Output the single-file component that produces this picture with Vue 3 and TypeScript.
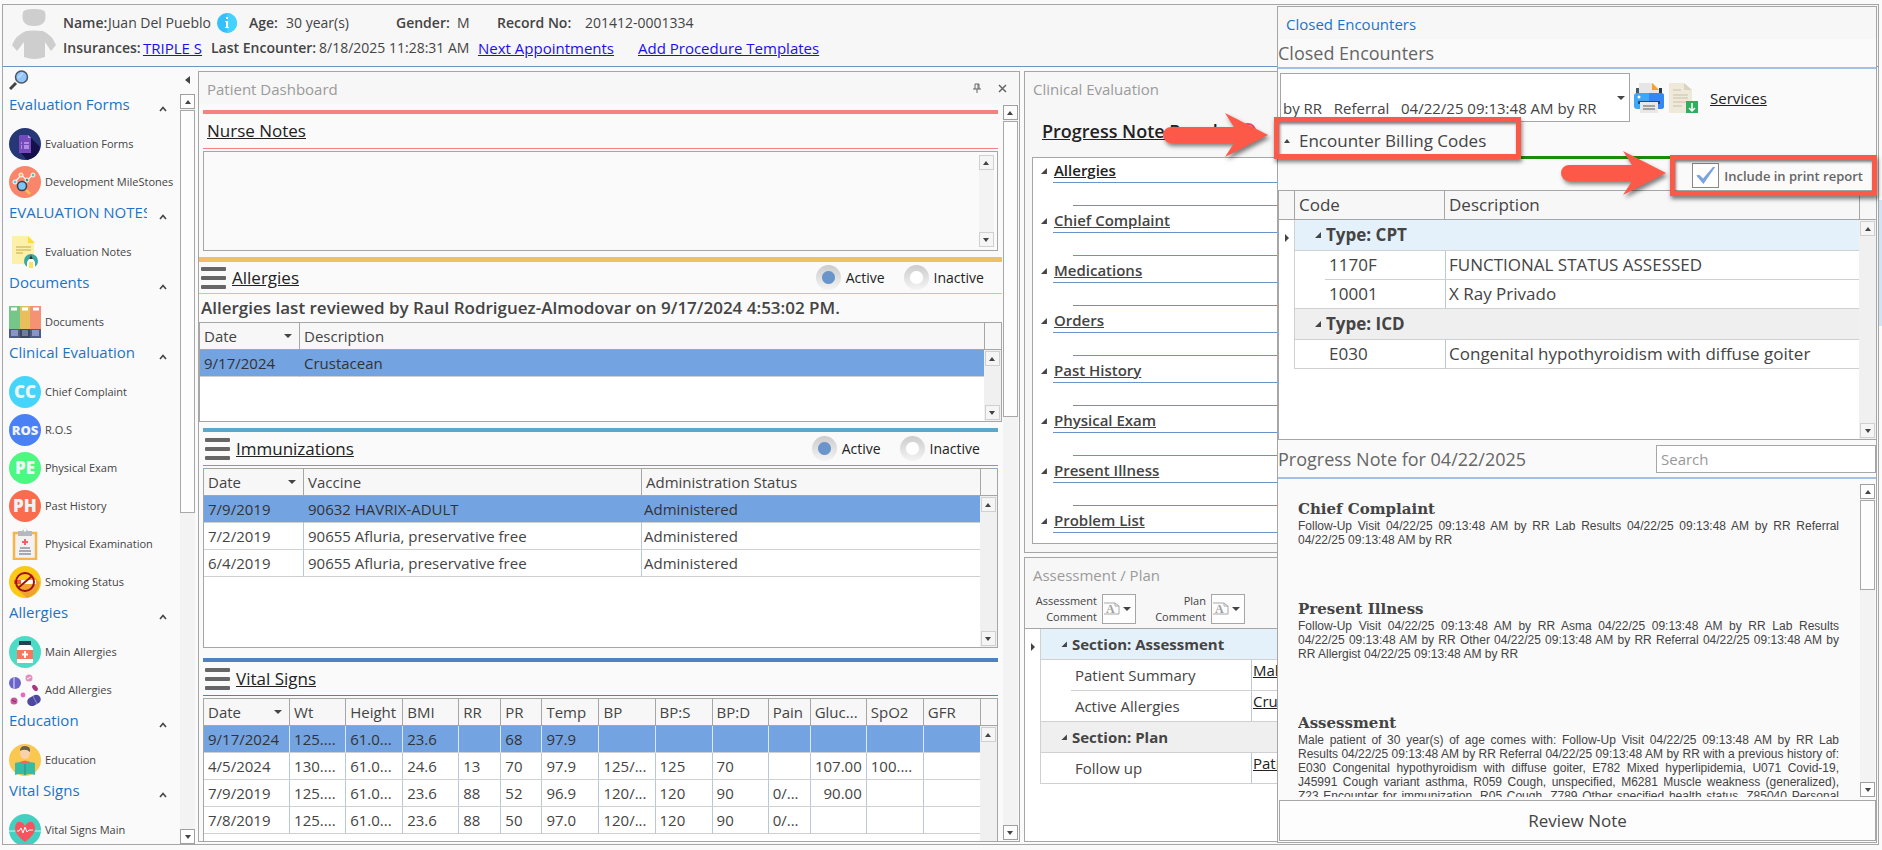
<script setup lang="ts">
import { h, ref } from 'vue'

interface MenuItem { label: string; icon: string; mark?: string }
interface MenuGroup { title: string; items: MenuItem[] }

const ScrollBar = (props: { thumb?: number; light?: boolean }) =>
  h('div', { class: ['sbar', { light: props.light }] }, [
    h('button', { type: 'button', class: 'sbtn up', 'aria-label': 'Scroll up' }, [h('i')]),
    h('div', { class: 'strack' }, props.thumb ? [h('div', { class: 'sthumb', style: { height: props.thumb + '%' } })] : []),
    h('button', { type: 'button', class: 'sbtn down', 'aria-label': 'Scroll down' }, [h('i')]),
  ])
ScrollBar.props = { thumb: Number, light: Boolean }

const menu: MenuGroup[] = [
  { title: 'Evaluation Forms', items: [{ label: 'Evaluation Forms', icon: 'forms' }, { label: 'Development MileStones', icon: 'miles' }] },
  { title: 'EVALUATION NOTES', items: [{ label: 'Evaluation Notes', icon: 'notes' }] },
  { title: 'Documents', items: [{ label: 'Documents', icon: 'docs' }] },
  {
    title: 'Clinical Evaluation',
    items: [
      { label: 'Chief Complaint', icon: 'cc', mark: 'CC' },
      { label: 'R.O.S', icon: 'ros', mark: 'ROS' },
      { label: 'Physical Exam', icon: 'pe', mark: 'PE' },
      { label: 'Past History', icon: 'ph', mark: 'PH' },
      { label: 'Physical Examination', icon: 'clip' },
      { label: 'Smoking Status', icon: 'smoke' },
    ],
  },
  { title: 'Allergies', items: [{ label: 'Main Allergies', icon: 'bottle' }, { label: 'Add Allergies', icon: 'pills' }] },
  { title: 'Education', items: [{ label: 'Education', icon: 'edu' }] },
  { title: 'Vital Signs', items: [{ label: 'Vital Signs Main', icon: 'heart' }] },
]

const allergyStatus = ref('active')
const immunStatus = ref('active')
const includePrint = ref(true)
const search = ref('')

const vaccines = [
  ['7/9/2019', '90632 HAVRIX-ADULT', 'Administered'],
  ['7/2/2019', '90655 Afluria, preservative free', 'Administered'],
  ['6/4/2019', '90655 Afluria, preservative free', 'Administered'],
]

const vitalCols = [
  { name: 'Date', w: 86 }, { name: 'Wt', w: 56 }, { name: 'Height', w: 57 }, { name: 'BMI', w: 56 },
  { name: 'RR', w: 42 }, { name: 'PR', w: 41 }, { name: 'Temp', w: 57 }, { name: 'BP', w: 56 },
  { name: 'BP:S', w: 57 }, { name: 'BP:D', w: 56 }, { name: 'Pain', w: 42 }, { name: 'Gluc...', w: 56 },
  { name: 'SpO2', w: 57 }, { name: 'GFR', w: 56 },
]
const vitals = [
  ['9/17/2024', '125....', '61.0...', '23.6', '', '68', '97.9', '', '', '', '', '', '', ''],
  ['4/5/2024', '130....', '61.0...', '24.6', '13', '70', '97.9', '125/...', '125', '70', '', '107.00', '100....', ''],
  ['7/9/2019', '125....', '61.0...', '23.6', '88', '52', '96.9', '120/...', '120', '90', '0/...', '90.00', '', ''],
  ['7/8/2019', '125....', '61.0...', '23.6', '88', '50', '97.0', '120/...', '120', '90', '0/...', '', '', ''],
]

const noteSections = ['Allergies', 'Chief Complaint', 'Medications', 'Orders', 'Past History', 'Physical Exam', 'Present Illness', 'Problem List']

const encounter = 'by RR\u00a0\u00a0 Referral\u00a0\u00a0 04/22/25 09:13:48 AM by RR'

const note = [
  { title: 'Chief Complaint', size: 'short', text: 'Follow-Up Visit 04/22/25 09:13:48 AM by RR Lab Results 04/22/25 09:13:48 AM by RR Referral 04/22/25 09:13:48 AM by RR' },
  { title: 'Present Illness', size: 'mid', text: 'Follow-Up Visit 04/22/25 09:13:48 AM by RR Asma 04/22/25 09:13:48 AM by RR Lab Results 04/22/25 09:13:48 AM by RR Other 04/22/25 09:13:48 AM by RR Referral 04/22/25 09:13:48 AM by RR Allergist 04/22/25 09:13:48 AM by RR' },
  { title: 'Assessment', size: 'long', text: 'Male patient of 30 year(s) of age comes with: Follow-Up Visit 04/22/25 09:13:48 AM by RR Lab Results 04/22/25 09:13:48 AM by RR Referral 04/22/25 09:13:48 AM by RR with a previous history of: E030 Congenital hypothyroidism with diffuse goiter, E782 Mixed hyperlipidemia, U071 Covid-19, J45991 Cough variant asthma, R059 Cough, unspecified, M6281 Muscle weakness (generalized), Z23 Encounter for immunization, R05 Cough, Z789 Other specified health status, Z85040 Personal history' },
]
</script>

<template>
  <div class="page">
    <div class="frame">
      <header class="patient">
        <svg class="avatar" viewBox="0 0 44 50" aria-hidden="true">
          <path d="M11 3Q12 0 22 0Q32 0 33 3Q36 17 22 17Q8 17 11 3Z" fill="#cecece" />
          <path d="M14 22Q22 21 31 22Q40 26 44 36L39 42L33 33V48Q22 52 12 48V33L5 42L0 36Q4 26 14 22Z" fill="#cecece" />
        </svg>
        <div class="facts">
          <div class="row one">
            <b>Name:</b><span>Juan Del Pueblo</span>
            <svg viewBox="0 0 20 20" width="20" height="20" aria-label="Information"><circle cx="10" cy="10" r="10" fill="#34c0fb" /><path d="M10 0A10 10 0 0 1 10 20Z" fill="#46d2ff" /><path d="M9 4H11V6H9ZM8 8H11V14H12V15H8V14H9V9H8Z" fill="#fff" /></svg>
            <b>Age:</b><span>30 year(s)</span><b>Gender:</b><span>M</span><b>Record No:</b><span>201412-0001334</span>
          </div>
          <div class="row two">
            <b>Insurances:</b><a href="#">TRIPLE S</a><b>Last Encounter:</b><span>8/18/2025 11:28:31 AM</span><a href="#">Next Appointments</a><a href="#">Add Procedure Templates</a>
          </div>
        </div>
      </header>

      <main class="work">
        <nav class="side">
          <div class="sidetop">
            <svg width="20" height="20" viewBox="0 0 20 20" aria-label="Search"><path d="M1 19L7 13" stroke="#444" stroke-width="3" /><circle cx="12.500" cy="7" r="6" fill="#93c6fb" stroke="#4d5560" stroke-width="1.500" /><path d="M9 8L14 3" stroke="#bfe0ff" stroke-width="1.500" /></svg>
            <svg width="5" height="8" viewBox="0 0 5 8" aria-label="Collapse"><path d="M5 0V8L0 4Z" fill="#444" /></svg>
          </div>
          <div class="sidebody">
            <div class="groups">
              <section v-for="g in menu" :key="g.title">
                <h2><span>{{ g.title }}</span><svg width="8" height="6" viewBox="0 0 8 6"><path d="M1 5L4 1.500L7 5" fill="none" stroke="#444" stroke-width="1.600" /></svg></h2>
                <a v-for="i in g.items" :key="i.label" href="#" class="item">
                  <span v-if="i.mark" class="mark" :class="i.icon">{{ i.mark }}</span>
                  <svg v-else width="32" height="32" viewBox="0 0 32 32" aria-hidden="true">
                    <template v-if="i.icon === 'forms'">
                      <circle cx="16" cy="16" r="16" fill="#263775" /><path d="M12 25L22 10L31 19Q29 30 18 32Z" fill="#150f4a" /><path d="M11 7H19L22 10V25H10V8Z" fill="#7649bd" /><path d="M19 7L22 10H19Z" fill="#b99ae8" /><path d="M12 15H13M15 15H20M12 18H13M15 18H20M12 20H13M15 20H20" stroke="#e4d6fa" />
                    </template>
                    <template v-else-if="i.icon === 'miles'">
                      <circle cx="16" cy="16" r="16" fill="#f9856a" /><path d="M6 16L12 9L18 14L24 9" fill="none" stroke="#fff" stroke-width="1.200" /><circle cx="6" cy="16" r="2" fill="#5cc7f5" stroke="#fff" /><circle cx="12" cy="9" r="2" fill="#f8b84a" stroke="#fff" /><circle cx="18" cy="14" r="2" fill="#2b9c8c" stroke="#fff" /><circle cx="24" cy="9" r="2" fill="#3fd0b8" stroke="#fff" /><path d="M17 24L21 28" stroke="#f8c34a" stroke-width="2.500" /><circle cx="13" cy="20" r="4.500" fill="#7ac8f7" stroke="#3b4256" stroke-width="1.600" />
                    </template>
                    <template v-else-if="i.icon === 'notes'">
                      <path d="M3 0H19L25 7V28H3Z" fill="#fdf0a8" /><path d="M19 0L26 7H19Z" fill="#fcdc35" /><path d="M7 11H22M7 14H22M7 17H14" stroke="#c7a944" /><circle cx="22" cy="25" r="7" fill="#37a9a3" /><path d="M18 32V26L22 20L26 26V32Z" fill="#fff" /><path d="M20 32V26H24V32Z" fill="#fde35b" /><path d="M20 23L22 19L24 23Z" fill="#333" />
                    </template>
                    <template v-else-if="i.icon === 'docs'">
                      <rect width="11" height="23" fill="#76c68a" /><rect x="11" width="10" height="23" fill="#e9bf5b" /><rect x="21" width="11" height="23" fill="#f59273" /><rect y="23" width="32" height="9" fill="#4f5a86" /><rect x="11" y="23" width="10" height="9" fill="#3d4766" /><path d="M2 3H8M13 3H19M24 3H30" stroke="#fff" stroke-width="3" /><path d="M2 24H9V30H2ZM23 24H30V30H23Z" fill="#8a95c4" /><rect x="13" y="24" width="6" height="6" fill="#6f7da5" />
                    </template>
                    <template v-else-if="i.icon === 'clip'">
                      <rect x="5" y="5" width="22" height="26" fill="#f2f2f2" stroke="#f7b548" stroke-width="2.500" /><path d="M9 3H13Q16-2 19 3H23V8H9Z" fill="#b5b8bd" /><circle cx="16" cy="2" r="1.500" fill="#fff" /><path d="M16 11V17M13 14H19" stroke="#fb5d68" stroke-width="2" /><path d="M11 20H21M10 23H22M10 26H22" stroke="#5d6470" />
                    </template>
                    <template v-else-if="i.icon === 'smoke'">
                      <circle cx="16" cy="16" r="16" fill="#fbc918" /><path d="M23 8L31 17Q29 29 18 32L9 24Z" fill="#eda233" /><rect x="5" y="14" width="7" height="4" fill="#f05a32" /><rect x="12" y="14" width="15" height="4" fill="#fff" /><circle cx="16" cy="16" r="9" fill="none" stroke="#a01010" stroke-width="2" /><path d="M9 22L23 10" stroke="#a01010" stroke-width="2" />
                    </template>
                    <template v-else-if="i.icon === 'bottle'">
                      <circle cx="16" cy="16" r="16" fill="#4edbc5" /><rect x="10" y="5" width="12" height="4" fill="#26405a" /><path d="M11 9H21L24 12V27H8V12Z" fill="#fff" /><rect x="8" y="14" width="16" height="9" fill="#fa7660" /><path d="M16 15V22M13 18.500H19" stroke="#fff" stroke-width="2" />
                    </template>
                    <template v-else-if="i.icon === 'pills'">
                      <circle cx="6" cy="9" r="6" fill="#6a65c6" /><path d="M5 3V15" stroke="#aaa5ea" stroke-width="2" /><circle cx="20" cy="4" r="3.500" fill="#e48cbf" /><path d="M18 5L22 3" stroke="#fff" /><ellipse cx="26" cy="14" rx="2.200" ry="3.500" transform="rotate(-40 26 14)" fill="#a93482" /><circle cx="14" cy="21" r="2.400" fill="#f561c2" /><circle cx="5" cy="27" r="3.500" fill="#c9559a" /><path d="M3 26L7 28" stroke="#7a2a62" /><rect x="18" y="22" width="14" height="9" rx="4.500" transform="rotate(-28 25 26.500)" fill="#4e49a0" /><path d="M24 22L28 30" stroke="#8f8ad8" />
                    </template>
                    <template v-else-if="i.icon === 'edu'">
                      <circle cx="16" cy="16" r="16" fill="#fbc84f" /><path d="M8 20Q16 13 24 20V24H8Z" fill="#f4635e" /><ellipse cx="16" cy="9" rx="5" ry="6" fill="#f7d2ac" /><path d="M11 7Q11 2 16 2Q22 2 21 8Q18 5 13 6Z" fill="#6b5d52" /><path d="M6 19Q11 17 16 20Q21 17 26 19V31Q20 29 16 31Q12 29 6 31Z" fill="#34bca8" /><path d="M16 20V31" stroke="#1f9384" />
                    </template>
                    <template v-else>
                      <circle cx="16" cy="16" r="16" fill="#43d0c0" /><path d="M0 17H8M24 17H32" stroke="#d8f7f2" /><path d="M16 28Q5 20 6 13Q7 7 12 8Q15 9 16 12Q17 9 20 8Q25 7 26 13Q27 20 16 28Z" fill="#f9545e" /><path d="M8 17H10L12 14L14 19L16 13L18 18L20 16H24" fill="none" stroke="#fff" />
                    </template>
                  </svg>
                  <span class="lbl">{{ i.label }}</span>
                </a>
              </section>
            </div>
            <ScrollBar :thumb="56" />
          </div>
        </nav>

        <section class="panel dash">
          <div class="ptitle">
            <h1>Patient Dashboard</h1>
            <span class="tools">
              <button type="button" aria-label="Pin"><svg width="8" height="10" viewBox="0 0 8 10"><path d="M2 1H6V6M2 1V6M5 1V6M0 6H8M4 6V10" fill="none" stroke="#666" /></svg></button>
              <button type="button" aria-label="Close"><svg width="9" height="9" viewBox="0 0 9 9"><path d="M1 1L8 8M8 1L1 8" stroke="#666" stroke-width="1.500" /></svg></button>
            </span>
          </div>
          <div class="pbody">
            <div class="dcol">
              <section class="card pink">
                <div class="ctitle"><a href="#">Nurse Notes</a></div>
                <div class="memo">
                  <textarea aria-label="Nurse Notes"></textarea>
                  <ScrollBar light />
                </div>
              </section>

              <section class="card amber wide">
                <div class="ctitle">
                  <button class="burger" type="button" aria-label="Allergies menu"><i /><i /><i /></button>
                  <a href="#">Allergies</a>
                  <div class="radios">
                    <label><input v-model="allergyStatus" type="radio" name="alg" value="active" />Active</label>
                    <label><input v-model="allergyStatus" type="radio" name="alg" value="inactive" />Inactive</label>
                  </div>
                </div>
                <p class="review">Allergies last reviewed by Raul Rodriguez-Almodovar on 9/17/2024 4:53:02 PM.</p>
                <div class="gridbox small">
                  <div class="gmain">
                    <table>
                      <colgroup><col class="w100" /><col /></colgroup>
                      <thead><tr><th>Date<i class="sort" /></th><th>Description</th></tr></thead>
                      <tbody><tr class="sel flat"><td>9/17/2024</td><td>Crustacean</td></tr></tbody>
                    </table>
                  </div>
                  <div class="gside"><span /><ScrollBar light /></div>
                </div>
              </section>

              <section class="card teal">
                <div class="ctitle">
                  <button class="burger" type="button" aria-label="Immunizations menu"><i /><i /><i /></button>
                  <a href="#">Immunizations</a>
                  <div class="radios">
                    <label><input v-model="immunStatus" type="radio" name="imm" value="active" />Active</label>
                    <label><input v-model="immunStatus" type="radio" name="imm" value="inactive" />Inactive</label>
                  </div>
                </div>
                <div class="gridbox tall">
                  <div class="gmain">
                    <table>
                      <colgroup><col class="w100" /><col /><col /></colgroup>
                      <thead><tr><th>Date<i class="sort" /></th><th>Vaccine</th><th>Administration Status</th></tr></thead>
                      <tbody>
                        <tr v-for="(r, n) in vaccines" :key="n" :class="{ sel: n === 0, flat: n === 0 }"><td v-for="(c, k) in r" :key="k" :class="{ tight: k === 2 }">{{ c }}</td></tr>
                      </tbody>
                    </table>
                  </div>
                  <div class="gside"><span /><ScrollBar light /></div>
                </div>
              </section>

              <section class="card blue">
                <div class="ctitle">
                  <button class="burger" type="button" aria-label="Vital Signs menu"><i /><i /><i /></button>
                  <a href="#">Vital Signs</a>
                </div>
                <div class="gridbox rest">
                  <div class="gmain">
                    <table>
                      <colgroup><col v-for="c in vitalCols" :key="c.name" :style="{ width: c.w + 'px' }" /></colgroup>
                      <thead><tr><th v-for="(c, n) in vitalCols" :key="c.name">{{ c.name }}<i v-if="n === 0" class="sort" /></th></tr></thead>
                      <tbody>
                        <tr v-for="(r, n) in vitals" :key="n" :class="{ sel: n === 0 }"><td v-for="(c, k) in r" :key="k" :class="{ num: k === 11 }">{{ c }}</td></tr>
                      </tbody>
                    </table>
                  </div>
                  <div class="gside"><span /><ScrollBar light class="nodown" /></div>
                </div>
              </section>
            </div>
            <ScrollBar :thumb="42" />
          </div>
        </section>

        <div class="right">
          <section class="panel clin">
            <div class="ptitle"><h1>Clinical Evaluation</h1></div>
            <div class="pn"><a href="#">Progress Note Panel</a><svg width="16" height="16" viewBox="0 0 16 16"><circle cx="8" cy="8" r="7" fill="#fbe4ea" stroke="#f2466c" stroke-width="2" /></svg></div>
            <ul class="tree">
              <li v-for="s in noteSections" :key="s">
                <div class="thead"><i class="tri" /><a href="#">{{ s }}</a></div>
                <div class="tline" />
              </li>
            </ul>
          </section>
          <section class="panel plan">
            <div class="ptitle"><h1>Assessment / Plan</h1></div>
            <div class="comments">
              <template v-for="c in ['Assessment', 'Plan']" :key="c">
                <span>{{ c }}<br />Comment</span>
                <button type="button" :aria-label="c + ' comment'">
                  <svg width="16" height="14" viewBox="0 0 16 14"><path d="M0 1H11L15 4V12H0M11 1V4H15" fill="none" stroke="#a8a8a8" /><text x="2" y="11" font-family="Liberation Serif, serif" font-size="12" font-weight="bold" fill="#a0a0a0">A</text></svg>
                  <i class="sort" />
                </button>
              </template>
            </div>
            <table class="ptable">
              <colgroup><col class="c16" /><col class="c30" /><col class="c180" /><col /></colgroup>
              <tbody>
                <tr class="hl"><td class="ind"><i class="ptr" /></td><th colspan="3"><i class="tri" />Section: Assessment</th></tr>
                <tr><td class="ind" /><td class="nob" /><td class="key">Patient Summary</td><td><a href="#">Male</a></td></tr>
                <tr><td class="ind" /><td /><td class="key">Active Allergies</td><td><a href="#">Crust</a></td></tr>
                <tr class="gr"><td class="ind" /><th colspan="3"><i class="tri" />Section: Plan</th></tr>
                <tr><td class="ind" /><td /><td class="key">Follow up</td><td><a href="#">Patie</a></td></tr>
              </tbody>
            </table>
          </section>
        </div>
      </main>

      <aside class="drawer">
        <h2 class="dtitle">Closed Encounters</h2>
        <h3 class="dhead">Closed Encounters</h3>
        <div class="pick">
          <div class="combo">
            <select aria-label="Encounter"><option>{{ encounter }}</option></select>
            <i class="sort" />
          </div>
          <button type="button" aria-label="Print">
            <svg width="30" height="30" viewBox="0 0 30 30"><path d="M5 0H19L25 6V12H5Z" fill="#e6e6e6" /><path d="M18 0L25 7H18Z" fill="#fa9f25" /><rect x="2" y="5" width="3" height="6" fill="#455a64" /><rect x="25" y="5" width="3" height="6" fill="#263d47" /><rect y="10" width="30" height="16" rx="3" fill="#3fa7f7" /><path d="M15 10H27Q30 10 30 13V23Q30 26 27 26H15Z" fill="#3588f3" /><rect x="4" y="18" width="22" height="3" fill="#2b4a66" /><circle cx="5" cy="14" r="1.500" fill="#fff" /><rect x="6" y="19" width="18" height="11" fill="#e8e8e8" /><path d="M9 23H21M9 26H21" stroke="#8a8a8a" stroke-width="1.500" /></svg>
          </button>
          <button type="button" aria-label="Export">
            <svg width="30" height="30" viewBox="0 0 30 30"><path d="M1 0H16L24 7V30H1Z" fill="#eee9d9" /><path d="M16 0L24 7H16Z" fill="#d9d3c0" /><path d="M5 7H13M5 12H20M5 15H20M5 19H20M5 23H14" stroke="#c9c2ad" /><rect x="18" y="18" width="12" height="12" fill="#2fae5f" /><path d="M24 20V28M21 25L24 28L27 25" fill="none" stroke="#fff" stroke-width="1.500" /></svg>
          </button>
          <a href="#">Services</a>
        </div>
        <div class="billing">
          <button type="button" class="bhead"><i class="upt" />Encounter Billing Codes</button>
          <div class="ring r1" />
          <svg class="arrow a1" width="110" height="50" viewBox="0 0 110 50" aria-hidden="true"><path d="M8 14H71L62 0L105 22L62 44L71 30H8A8 8 0 0 1 8 14Z" fill="#fd5949" /></svg>
        </div>
        <div class="print">
          <label><input v-model="includePrint" type="checkbox" /><span>Include in print report</span></label>
          <div class="ring r2" />
          <svg class="arrow a2" width="110" height="50" viewBox="0 0 110 50" aria-hidden="true"><path d="M8 14H71L62 0L105 22L62 44L71 30H8A8 8 0 0 1 8 14Z" fill="#fd5949" /></svg>
        </div>
        <div class="codes">
          <table>
            <colgroup><col class="c16" /><col class="c30" /><col class="c120" /><col /></colgroup>
            <thead><tr><th /><th colspan="2">Code</th><th>Description</th></tr></thead>
            <tbody>
              <tr class="hl"><td class="ind"><i class="ptr" /></td><th colspan="3"><i class="tri" />Type: CPT</th></tr>
              <tr><td class="ind" /><td class="nob" /><td class="key">1170F</td><td>FUNCTIONAL STATUS ASSESSED</td></tr>
              <tr><td class="ind" /><td /><td class="key">10001</td><td>X Ray Privado</td></tr>
              <tr class="gr"><td class="ind" /><th colspan="3"><i class="tri" />Type: ICD</th></tr>
              <tr><td class="ind" /><td /><td class="key">E030</td><td>Congenital hypothyroidism with diffuse goiter</td></tr>
            </tbody>
          </table>
          <div class="gside"><span /><ScrollBar light /></div>
        </div>
        <div class="pnote">
          <h3>Progress Note for 04/22/2025</h3>
          <input v-model="search" type="text" placeholder="Search" aria-label="Search" />
        </div>
        <div class="note">
          <div class="paper">
            <article v-for="n in note" :key="n.title" :class="n.size">
              <h4>{{ n.title }}</h4>
              <p>{{ n.text }}</p>
            </article>
          </div>
          <ScrollBar :thumb="32" />
        </div>
        <button type="button" class="reviewbtn">Review Note</button>
      </aside>
    </div>
    <div class="edge" />
  </div>
</template>

<style>
body { margin: 0; background: #fafafa; }
.sbar { display: flex; flex-direction: column; width: 15px; flex: none; background: #f3f3f3; }
.sbtn { display: flex; align-items: center; justify-content: center; width: 15px; height: 15px; padding: 0; flex: none; border: 1px solid #a0a0a0; background: #fdfdfd; box-sizing: border-box; }
.sbtn i { border: 3px solid transparent; }
.sbtn.up i { border-bottom: 4px solid #444; border-top: 0; }
.sbtn.down i { border-top: 4px solid #444; border-bottom: 0; }
.strack { flex: 1; padding-top: 1px; }
.sthumb { box-sizing: border-box; border: 1px solid #a8a8a8; background: #fdfdfd; }
.sbar.light .sbtn { border-color: #d0d0d0; background: #f5f5f5; }
.sbar.nodown .down { display: none; }
</style>

<style scoped>
.page { position: relative; height: 100vh; min-height: 850px; padding: 4px 3px 5px 2px; box-sizing: border-box; background: #fafafa; color: #444; font: 14px/20px "Open Sans", "Noto Sans", sans-serif; overflow: hidden; }
.edge { position: absolute; right: 0; top: 200px; width: 3px; height: 126px; background: #cfe5f5; }
.frame { position: relative; height: 100%; box-sizing: border-box; border: 1px solid #a6a6a6; display: flex; flex-direction: column; }
h1, h2, h3, h4, p, ul { margin: 0; padding: 0; font-weight: 400; }
button { font: inherit; color: inherit; cursor: pointer; }
i { font-style: normal; display: inline-block; flex: none; }
a { color: inherit; }

.patient { display: flex; height: 61px; flex: none; border-bottom: 1px solid #6a94c9; background: #f7f7f7; }
.avatar { width: 44px; height: 50px; margin: 4px 7px 0 9px; }
.row { display: grid; white-space: nowrap; height: 25px; align-items: center; }
.facts { padding-top: 5px; }
.row b { font-weight: 600; }
.row a { color: #1a0ff0; font-size: 15px; }
.one { grid-template-columns: 45px 109px 32px 37px 110px 61px 40px 88px auto; }
.two { grid-template-columns: 80px 68px 108px 159px 160px auto; }

.work { flex: 1; min-height: 0; display: grid; grid-template-columns: 195px minmax(0, 820fr) minmax(0, 855fr); padding: 0 1px 2px 0; }
.side { display: flex; flex-direction: column; min-height: 0; margin-bottom: -2px; }
.sidetop { display: flex; justify-content: space-between; align-items: center; height: 26px; flex: none; padding: 0 8px 0 6px; }
.sidebody { flex: 1; display: flex; min-height: 0; justify-content: space-between; padding: 0 3px 0 0; }
.sidebody > .sbar { margin-top: 1px; }
.groups { flex: 1; overflow: hidden; padding-left: 6px; }
.groups h2 { display: flex; justify-content: space-between; height: 32px; width: 158px; font-size: 15px; line-height: 22px; color: #1e73c6; }
.groups h2 span { width: 138px; overflow: hidden; white-space: nowrap; }
.groups h2 svg { margin-top: 13px; }
.item { display: flex; align-items: center; height: 38px; gap: 4px; font-size: 11px; text-decoration: none; white-space: nowrap; }
.mark { width: 32px; height: 32px; border-radius: 16px; text-align: center; line-height: 32px; font-weight: 800; font-size: 17px; color: #eef3f5; flex: none; }
.item svg { flex: none; }
.cc { background: #45d5fa; }
.ros { background: #4a80f5; font-size: 13px; }
.pe { background: #4cf881; }
.ph { background: #f96c4e; }

.panel { border: 1px solid #a6a6a6; box-sizing: border-box; min-height: 0; overflow: hidden; display: flex; flex-direction: column; background: #fafafa; }
.dash { margin-top: 4px; }
.ptitle { display: flex; justify-content: space-between; height: 32px; flex: none; align-items: center; padding: 0 8px; background: #f7f7f7; color: #9b9b9b; box-sizing: border-box; }
.ptitle h1 { font-size: 15px; padding-top: 2px; }
.tools { display: flex; gap: 17px; padding-right: 4px; }
.tools button { border: 0; background: none; padding: 0; display: flex; align-items: center; }
.pbody { flex: 1; min-height: 0; display: flex; padding: 1px 1px 1px 0; }
.dcol { flex: 1; min-width: 0; padding-top: 5px; display: flex; flex-direction: column; margin-bottom: -1px; }
.card { margin: 0 5px 0 4px; border-top: 4px solid var(--c); }
.pink { --c: #f5827f; padding-bottom: 6px; }
.amber { --c: #efc164; padding-bottom: 6px; }
.teal { --c: #5aa9cb; padding-bottom: 10px; }
.blue { --c: #4f82c0; flex: 1; min-height: 0; display: flex; flex-direction: column; }
.wide { margin: 0 1px 0 0; border-top-width: 5px; }
.ctitle { display: flex; align-items: center; height: 33px; flex: none; border-bottom: 1px solid var(--c); padding-left: 2px; }
.pink .ctitle { height: 34px; padding-left: 4px; }
.wide .ctitle { height: 31px; }
.ctitle a { font-size: 17px; line-height: 24px; color: #222; }
.burger { display: flex; flex-direction: column; gap: 5px; width: 25px; border: 0; padding: 0; margin-right: 6px; background: none; }
.burger i { height: 4px; width: 25px; background: #666; border-radius: 1px; }
.radios { margin-left: auto; margin-right: 18px; display: flex; gap: 19px; color: #222; }
.radios label { display: flex; align-items: center; gap: 5px; }
.radios input { appearance: none; width: 25px; height: 25px; margin: 0; border-radius: 13px; background: radial-gradient(circle, #fff 6px, transparent 7px), linear-gradient(#cccccc, #f4f4f4); }
.radios input:checked { background: radial-gradient(circle, #6a95cb 6px, transparent 7px), linear-gradient(#cccccc, #f4f4f4); }
.memo { display: flex; height: 92px; margin-top: 2px; border: 1px solid #a6a6a6; padding: 3px 3px 3px 0; }
.memo textarea { flex: 1; border: 0; resize: none; background: none; outline: 0; }
.review { height: 28px; line-height: 28px; font-size: 17px; font-weight: 600; padding-left: 2px; white-space: nowrap; overflow: hidden; }
.gridbox { display: flex; border: 1px solid #a6a6a6; background: #fff; box-sizing: border-box; overflow: hidden; margin-top: 2px; }
.small { height: 100px; margin-top: 0; }
.tall { height: 180px; }
.rest { flex: 1; min-height: 0; border-bottom: 0; }
.gmain { flex: 1; min-width: 0; }
table { border-collapse: separate; border-spacing: 0; table-layout: fixed; width: 100%; }
.w100 { width: 100px; }
.gmain th, .gmain td { height: 26px; padding: 0 0 0 4px; text-align: left; font-weight: 400; font-size: 15px; line-height: 24px; white-space: nowrap; overflow: hidden; border-right: 1px solid #b9c8d8; border-bottom: 1px solid #d0d0d0; }
.gmain th { background: #f7f7f7; border-color: #a6a6a6; position: relative; }
.gmain td:last-child { border-right: 0; }
.gmain th:last-child { border-right: 0; }
.gmain td.tight { padding-left: 2px; }
.gmain td.num { text-align: right; padding: 0 4px 0 0; }
.gmain .sel td { background: #74a3e2; color: #333; border-right-color: #dbe8f8; }
.gmain .flat td { border-right-color: #74a3e2; }
.sort { border: 4px solid transparent; border-top: 4px solid #444; border-bottom: 0; }
th .sort { position: absolute; right: 7px; top: 11px; }
.gside { display: flex; flex-direction: column; width: 17px; flex: none; background: #f0f0f0; }
.gside > span { height: 26px; flex: none; border-left: 1px solid #a6a6a6; border-bottom: 1px solid #a6a6a6; background: #f7f7f7; }
.gside .sbar { flex: 1; margin: 1px; background: #f0f0f0; }

.right { margin: 4px 0 0 4px; display: flex; flex-direction: column; gap: 4px; min-height: 0; }
.clin { flex: 483 1 0; background: #f7f7f7; }
.plan { flex: 284 1 0; background: #f7f7f7; }
.pn { display: flex; align-items: center; gap: 22px; height: 53px; padding-left: 17px; flex: none; font-size: 18px; font-weight: 600; color: #222; }
.tree { list-style: none; margin: 0 8px 8px 7px; border: 1px solid #a6a6a6; flex: 1; background: #fff; overflow: hidden; }
.tree li { height: 50px; font-size: 15px; font-weight: 600; }
.tree li:first-child { color: #222; }
.thead { display: flex; align-items: center; gap: 7px; height: 24px; padding: 0 0 0 8px; }
.thead a { line-height: 24px; }
.tri { width: 6px; height: 6px; background: #444; clip-path: polygon(100% 0, 100% 100%, 0 100%); margin-top: 2px; }
.tline { margin-left: 20px; height: 22px; border-top: 1px solid #6a94c9; }
.tline::after { content: ""; display: block; margin: 22px 0 0 20px; border-top: 1px solid #6a94c9; }
.tree li:last-child .tline::after { display: none; }
.comments { display: grid; grid-template-columns: 64px 34px 65px 34px; column-gap: 5px; height: 38px; flex: none; padding-left: 8px; align-items: center; font-size: 11px; line-height: 16px; text-align: right; }
.comments button { height: 30px; border: 1px solid #a6a6a6; background: #fdfdfd; padding: 0 4px 0 1px; display: flex; align-items: center; justify-content: space-between; }
.ptable { background: #fff; border-top: 1px solid #a6a6a6; }
.plan::after { content: ""; flex: 1; background: #fff; }
.c16 { width: 16px; } .c30 { width: 30px; } .c180 { width: 180px; } .c120 { width: 120px; }
.ptable td, .ptable th, .codes td, .codes th { height: 30px; padding: 0 0 0 4px; text-align: left; font-weight: 400; font-size: 15px; white-space: nowrap; overflow: hidden; border-bottom: 1px solid #d0d0d0; }
.ptable td:last-child { border-left: 1px solid #b9c8d8; padding-left: 1px; vertical-align: top; color: #222; }
.ptable td.ind, .codes td.ind { border-bottom: 0; border-right: 1px solid #d0d0d0; padding: 0 0 0 6px; background: #fff; }
.nob { border-bottom: 0 !important; }
tbody th .tri { margin: 0 5px 3px 16px; }
tbody .hl th { background: #e4f1fa; }
tbody .gr th { background: #efefef; }
.ptable tbody th, .codes tbody th { font-weight: 700; }
.ptr { border: 4px solid transparent; border-left: 4px solid #444; border-right: 0; }

.drawer { position: absolute; top: 1px; right: 1px; bottom: 1px; width: 598px; border: 1px solid #a6a6a6; background: #fafafa; display: flex; flex-direction: column; }
.dtitle { height: 32px; line-height: 34px; padding-left: 8px; font-size: 15px; color: #1e73c6; background: #f7f7f7; }
.dhead { height: 28px; line-height: 28px; font-size: 18px; color: #666; border-bottom: 2px solid #a3c1e5; }
.pick { display: flex; align-items: center; height: 49px; margin-top: 4px; padding-left: 2px; font-size: 15px; }
.combo { position: relative; width: 350px; height: 49px; margin-right: 4px; }
.combo select { appearance: none; width: 100%; height: 100%; box-sizing: border-box; border: 1px solid #a6a6a6; border-radius: 0; background: #fff; color: #444; font: inherit; padding: 20px 0 0 2px; }
.combo .sort { position: absolute; right: 5px; top: 23px; }
.pick button { border: 0; background: none; padding: 0; margin-right: 4px; display: flex; }
.pick a { margin-left: 8px; color: #222; }
.billing { position: relative; height: 34px; border-bottom: 3px solid #1c8c0c; margin-left: 1px; }
.bhead { display: flex; align-items: center; gap: 9px; border: 0; background: none; height: 38px; padding: 0 0 0 5px; font-size: 17px; }
.upt { border: 3px solid transparent; border-bottom: 4px solid #444; border-top: 0; }
.ring { position: absolute; border: 5px solid #fd5949; box-sizing: border-box; box-shadow: 1px 3px 4px rgba(0, 0, 0, .5), inset 1px 2px 3px rgba(0, 0, 0, .5); pointer-events: none; z-index: 2; }
.r1 { left: -5px; top: -5px; width: 247px; height: 42px; }
.r2 { right: -1px; top: -4px; width: 207px; height: 41px; }
.arrow { position: absolute; z-index: 3; overflow: visible; filter: drop-shadow(2px 3px 2px rgba(0, 0, 0, .5)); }
.a1 { left: -116px; top: -9px; }
.a2 { left: 283px; top: -8px; }
.print { position: relative; height: 31px; display: flex; justify-content: flex-end; padding-right: 13px; }
.print label { display: flex; align-items: center; gap: 5px; font-size: 13px; font-weight: 600; color: #666; padding-top: 2px; }
.print input { appearance: none; width: 27px; height: 25px; margin: 0; border: 1px solid #888; background: #fff; box-sizing: border-box; }
.print input:checked::before { content: ""; display: block; width: 19px; height: 17px; margin: 3px; background: #7ba3dc; clip-path: polygon(0 50%, 16% 46%, 36% 68%, 88% 0, 100% 0, 38% 100%); }
.codes { display: flex; height: 248px; border: 1px solid #a6a6a6; border-right: 0; background: #fff; overflow: hidden; flex: none; }
.codes table { align-self: flex-start; }
.codes th, .codes td { font-size: 17px; height: 28px; }
.codes tbody th { height: 30px; }
.codes thead th { background: #f7f7f7; border-color: #a6a6a6; border-right: 1px solid #a6a6a6; }
.codes thead th:last-child { border-right: 0; }
.codes td:last-child { border-left: 1px solid #b9c8d8; padding-left: 3px; }
.codes .gside > span { height: 28px; }
.pnote { display: flex; justify-content: space-between; align-items: center; height: 37px; border-bottom: 2px solid #a3c1e5; flex: none; }
.pnote h3 { font-size: 18px; color: #666; }
.pnote input { width: 220px; height: 28px; box-sizing: border-box; border: 1px solid #a6a6a6; background: #fff; font: inherit; font-size: 15px; padding: 0 4px; outline: 0; }
.pnote input::placeholder { color: #999; opacity: 1; }
.note { flex: 1; min-height: 0; display: flex; padding: 5px 1px 3px 20px; }
.paper { flex: 1; overflow: hidden; padding: 15px 21px 0 0; font: 12px/14px "Liberation Sans", Arial, sans-serif; text-align: justify; }
.paper h4 { font: bold 15px/20px "DejaVu Serif", serif; }
.short { height: 100px; }
.mid { height: 114px; }
.reviewbtn { height: 41px; flex: none; border: 1px solid #a6a6a6; background: #fdfdfd; margin: 0 0 1px 1px; font-size: 17px; }
</style>
